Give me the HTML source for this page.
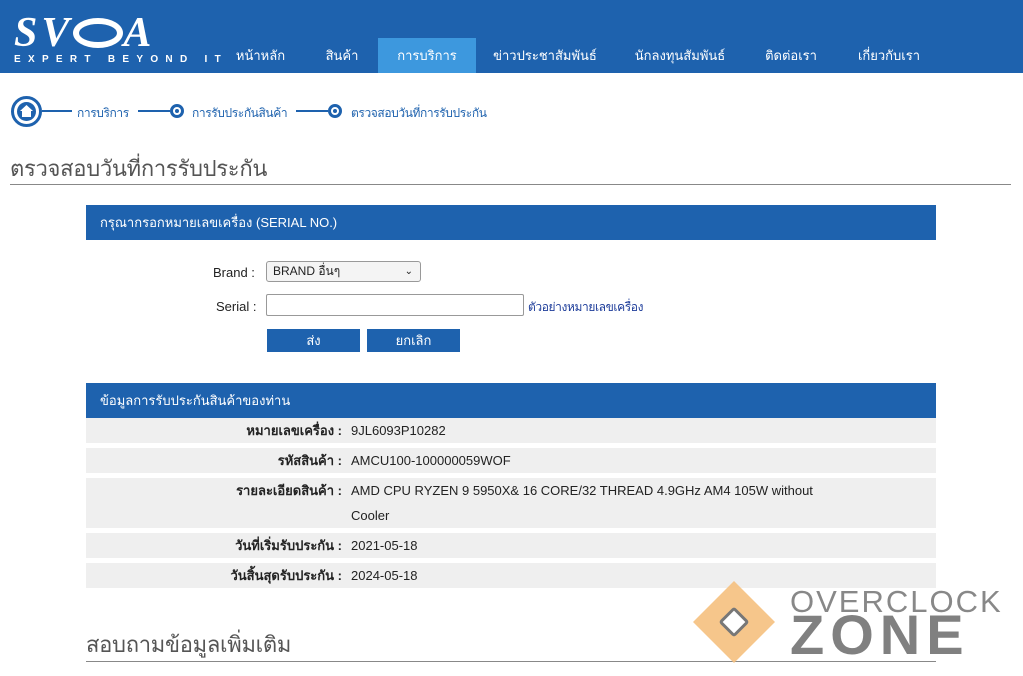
<!DOCTYPE html>
<html><head><meta charset="utf-8"><style>
*{margin:0;padding:0;box-sizing:border-box}
body{width:1023px;height:676px;overflow:hidden;background:#fff;font-family:"Liberation Sans","Noto Sans CJK SC",sans-serif;position:relative;color:#222}
.a{position:absolute}
.hdr{left:0;top:0;width:1023px;height:73px;background:#1e62ae}
.nav{top:38px;height:35px;color:#fff;font-size:13px;line-height:35px;text-align:center}
.bc{font-size:12px;color:#1e62ae;top:104px;letter-spacing:-0.4px;white-space:nowrap}
.ln{height:2px;background:#1e62ae;top:110px}
.dot{width:14px;height:14px;border:3px solid #1e62ae;border-radius:50%;top:104px}
.dot:after{content:"";position:absolute;left:2px;top:2px;width:4px;height:4px;background:#1e62ae;border-radius:50%}
.sh{left:86px;width:850px;height:35px;background:#1e62ae;color:#fff;font-size:13px;line-height:35px;padding-left:14px}
.row{left:86px;width:850px;background:#efefef;font-size:13px;line-height:25px}
.row b{position:absolute;right:594px;top:0;white-space:nowrap}
.row span{position:absolute;left:265px;top:0}
.btn{top:329px;height:23px;background:#1e62ae;color:#fff;font-size:13px;line-height:23px;text-align:center}
</style></head><body>
<div class="a hdr"></div>
<div class="a" style="left:14px;top:16px;width:198px;height:34px;color:#fff;font:900 42px/34px 'Liberation Serif',serif;letter-spacing:4px;font-style:italic;white-space:nowrap">SV<span style="display:inline-block;width:50px;height:30px;border:6px solid #fff;border-radius:50%;vertical-align:-2px"></span>A</div>
<div class="a" style="left:14px;top:54px;color:#fff;font-size:10px;font-weight:bold;letter-spacing:7.3px;white-space:nowrap">EXPERT BEYOND IT</div>
<div class="a nav" style="left:228px;width:65px">หน้าหลัก</div>
<div class="a nav" style="left:315px;width:54px">สินค้า</div>
<div class="a nav" style="left:378px;width:98px;background:#3d98de">การบริการ</div>
<div class="a nav" style="left:490px;width:110px">ข่าวประชาสัมพันธ์</div>
<div class="a nav" style="left:625px;width:110px">นักลงทุนสัมพันธ์</div>
<div class="a nav" style="left:758px;width:66px">ติดต่อเรา</div>
<div class="a nav" style="left:850px;width:78px">เกี่ยวกับเรา</div>
<div class="a" style="left:11px;top:96px;width:31px;height:31px;border:3px solid #1e62ae;border-radius:50%"></div>
<div class="a" style="left:17px;top:102px;width:19px;height:19px;background:#1e62ae;border-radius:50%"></div>
<svg class="a" style="left:19px;top:104px" width="15" height="14" viewBox="0 0 15 14"><path d="M7.5 1 L1 7 H3 V13 H12 V7 H14 Z" fill="#fff"/></svg>
<div class="a ln" style="left:42px;width:30px"></div>
<div class="a bc" style="left:77px">การบริการ</div>
<div class="a ln" style="left:138px;width:32px"></div>
<div class="a dot" style="left:170px"></div>
<div class="a bc" style="left:192px">การรับประกันสินค้า</div>
<div class="a ln" style="left:296px;width:32px"></div>
<div class="a dot" style="left:328px"></div>
<div class="a bc" style="left:351px">ตรวจสอบวันที่การรับประกัน</div>
<div class="a" style="left:10px;top:151px;font-size:22px;color:#555;letter-spacing:-0.3px">ตรวจสอบวันที่การรับประกัน</div>
<div class="a" style="left:10px;top:184px;width:1001px;height:1px;background:#888"></div>
<div class="a sh" style="top:205px">กรุณากรอกหมายเลขเครื่อง (SERIAL NO.)</div>
<div class="a" style="left:213px;top:265px;font-size:13px">Brand :</div>
<div class="a" style="left:266px;top:261px;width:155px;height:21px;border:1px solid #999;border-radius:3px;background:#f4f4f4;font-size:12px;line-height:19px;padding-left:6px">BRAND อื่นๆ<span style="position:absolute;right:7px;font-size:10px">&#8964;</span></div>
<div class="a" style="left:216px;top:299px;font-size:13px">Serial :</div>
<div class="a" style="left:266px;top:294px;width:258px;height:22px;border:1px solid #999;border-radius:2px"></div>
<div class="a" style="left:528px;top:298px;font-size:12px;color:#1e3d9a;letter-spacing:-0.4px">ตัวอย่างหมายเลขเครื่อง</div>
<div class="a btn" style="left:267px;width:93px">ส่ง</div>
<div class="a btn" style="left:367px;width:93px">ยกเลิก</div>
<div class="a sh" style="top:383px">ข้อมูลการรับประกันสินค้าของท่าน</div>
<div class="a row" style="top:418px;height:25px"><b>หมายเลขเครื่อง :</b><span>9JL6093P10282</span></div>
<div class="a row" style="top:448px;height:25px"><b>รหัสสินค้า :</b><span>AMCU100-100000059WOF</span></div>
<div class="a row" style="top:478px;height:50px"><b>รายละเอียดสินค้า :</b><span>AMD CPU RYZEN 9 5950X&amp; 16 CORE/32 THREAD 4.9GHz AM4 105W without<br>Cooler</span></div>
<div class="a row" style="top:533px;height:25px"><b>วันที่เริ่มรับประกัน :</b><span>2021-05-18</span></div>
<div class="a row" style="top:563px;height:25px"><b>วันสิ้นสุดรับประกัน :</b><span>2024-05-18</span></div>
<div class="a" style="left:86px;top:627px;font-size:22px;color:#555;letter-spacing:-0.3px">สอบถามข้อมูลเพิ่มเติม</div>
<div class="a" style="left:86px;top:661px;width:850px;height:1px;background:#888"></div>
<div class="a" style="left:705px;top:593px;width:58px;height:58px;background:#f5c07e;opacity:.9;transform:rotate(45deg)"></div>
<div class="a" style="left:723px;top:611px;width:22px;height:22px;border:3px solid #777;background:#fff;border-radius:3px;transform:rotate(45deg)"></div>
<div class="a" style="left:790px;top:587px;font-size:31px;color:#888;letter-spacing:2px;line-height:30px;white-space:nowrap">OVERCLOCK</div>
<div class="a" style="left:790px;top:609px;font-size:56px;font-weight:bold;color:#808080;letter-spacing:6px;line-height:52px;white-space:nowrap">ZONE</div>
</body></html>
